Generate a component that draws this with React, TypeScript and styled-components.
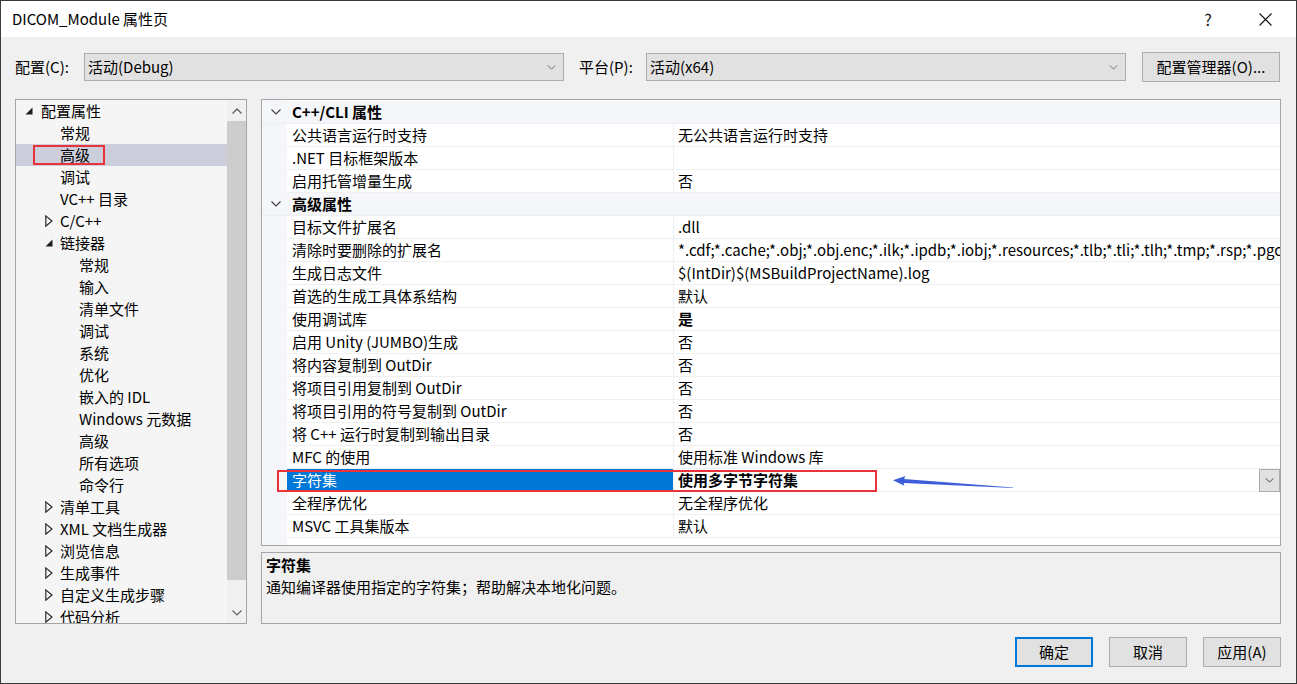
import React from "react";
import styled, { createGlobalStyle } from "styled-components";

const GlobalStyle = createGlobalStyle`
  html, body {
    margin: 0;
    padding: 0;
    background: #f0f0f0;
  }
  body {
    font-family: "Noto Sans CJK SC", "Noto Sans", sans-serif;
    font-size: 15px;
    color: #000;
  }
  * {
    box-sizing: border-box;
  }
`;

type TreeNode = {
  label: string;
  level: number;
  expand?: "open" | "closed";
  selected?: boolean;
};

const treeNodes: TreeNode[] = [
  { label: "配置属性", level: 0, expand: "open" },
  { label: "常规", level: 1 },
  { label: "高级", level: 1, selected: true },
  { label: "调试", level: 1 },
  { label: "VC++ 目录", level: 1 },
  { label: "C/C++", level: 1, expand: "closed" },
  { label: "链接器", level: 1, expand: "open" },
  { label: "常规", level: 2 },
  { label: "输入", level: 2 },
  { label: "清单文件", level: 2 },
  { label: "调试", level: 2 },
  { label: "系统", level: 2 },
  { label: "优化", level: 2 },
  { label: "嵌入的 IDL", level: 2 },
  { label: "Windows 元数据", level: 2 },
  { label: "高级", level: 2 },
  { label: "所有选项", level: 2 },
  { label: "命令行", level: 2 },
  { label: "清单工具", level: 1, expand: "closed" },
  { label: "XML 文档生成器", level: 1, expand: "closed" },
  { label: "浏览信息", level: 1, expand: "closed" },
  { label: "生成事件", level: 1, expand: "closed" },
  { label: "自定义生成步骤", level: 1, expand: "closed" },
  { label: "代码分析", level: 1, expand: "closed" },
];

type PropItem =
  | { kind: "category"; title: string }
  | { kind: "prop"; name: string; value: string; bold?: boolean; selected?: boolean };

const cleanExt =
  "*.cdf;*.cache;*.obj;*.obj.enc;*.ilk;*.ipdb;*.iobj;*.resources;*.tlb;*.tli;*.tlh;*.tmp;*.rsp;*.pgc;*.pgd;*.meta;*.tlog;*.manifest;*.res;*.pch;*.exp;*.idb;*.rep;*.xdc;*.pdb;*_manifest.rc;*.bsc;*.sbr;*.xml;*.metagen;*.bi";

const props: PropItem[] = [
  { kind: "category", title: "C++/CLI 属性" },
  { kind: "prop", name: "公共语言运行时支持", value: "无公共语言运行时支持" },
  { kind: "prop", name: ".NET 目标框架版本", value: "" },
  { kind: "prop", name: "启用托管增量生成", value: "否" },
  { kind: "category", title: "高级属性" },
  { kind: "prop", name: "目标文件扩展名", value: ".dll" },
  { kind: "prop", name: "清除时要删除的扩展名", value: cleanExt },
  { kind: "prop", name: "生成日志文件", value: "$(IntDir)$(MSBuildProjectName).log" },
  { kind: "prop", name: "首选的生成工具体系结构", value: "默认" },
  { kind: "prop", name: "使用调试库", value: "是", bold: true },
  { kind: "prop", name: "启用 Unity (JUMBO)生成", value: "否" },
  { kind: "prop", name: "将内容复制到 OutDir", value: "否" },
  { kind: "prop", name: "将项目引用复制到 OutDir", value: "否" },
  { kind: "prop", name: "将项目引用的符号复制到 OutDir", value: "否" },
  { kind: "prop", name: "将 C++ 运行时复制到输出目录", value: "否" },
  { kind: "prop", name: "MFC 的使用", value: "使用标准 Windows 库" },
  { kind: "prop", name: "字符集", value: "使用多字节字符集", bold: true, selected: true },
  { kind: "prop", name: "全程序优化", value: "无全程序优化" },
  { kind: "prop", name: "MSVC 工具集版本", value: "默认" },
];

const Chevron = ({ size = 9, color = "#444" }: { size?: number; color?: string }) => (
  <svg width={size} height={Math.round(size * 0.6)} viewBox="0 0 10 6">
    <path d="M0.5 0.5 L5 5 L9.5 0.5" fill="none" stroke={color} strokeWidth="1.1" />
  </svg>
);

const App = (): JSX.Element => {
  return (
    <>
      <GlobalStyle />
      <Window>
        <TitleBar>
          <TitleText>DICOM_Module 属性页</TitleText>
          <TitleButtons>
            <TitleButton>?</TitleButton>
            <TitleButton>
              <svg width="13" height="13" viewBox="0 0 13 13">
                <path d="M0.5 0.5 L12.5 12.5 M12.5 0.5 L0.5 12.5" stroke="#111" strokeWidth="1.1" />
              </svg>
            </TitleButton>
          </TitleButtons>
        </TitleBar>

        <ConfigRow>
          <FieldLabel $width={69}>配置(C):</FieldLabel>
          <Combo>
            <span>活动(Debug)</span>
            <Chevron color="#666" />
          </Combo>
          <FieldLabel $width={67} $gap={15}>平台(P):</FieldLabel>
          <Combo>
            <span>活动(x64)</span>
            <Chevron color="#666" />
          </Combo>
          <PushButton $width={138} $gap={16}>配置管理器(O)...</PushButton>
        </ConfigRow>

        <Main>
          <Tree>
            <TreeList>
              {treeNodes.map((node, i) => (
                <TreeItem key={i} $level={node.level} $selected={!!node.selected}>
                  {node.expand && (
                    <Expander $level={node.level}>
                      {node.expand === "open" ? (
                        <svg width="8" height="8" viewBox="0 0 8 8">
                          <path d="M7.5 0.5 L7.5 7.5 L0.5 7.5 Z" fill="#1e1e1e" />
                        </svg>
                      ) : (
                        <svg width="8" height="12" viewBox="0 0 8 12">
                          <path d="M0.8 0.8 L7 6 L0.8 11.2 Z" fill="none" stroke="#1e1e1e" strokeWidth="1.1" />
                        </svg>
                      )}
                    </Expander>
                  )}
                  {node.label}
                  {node.selected && <TreeMark />}
                </TreeItem>
              ))}
            </TreeList>
            <ScrollBar>
              <ScrollArrow>
                <svg width="10" height="6" viewBox="0 0 10 6">
                  <path d="M0.5 5.5 L5 1 L9.5 5.5" fill="none" stroke="#606060" strokeWidth="1.4" />
                </svg>
              </ScrollArrow>
              <ScrollThumb />
              <ScrollTrack />
              <ScrollArrow>
                <Chevron size={10} color="#606060" />
              </ScrollArrow>
            </ScrollBar>
          </Tree>

          <RightColumn>
            <Grid>
              {props.map((p, i) =>
                p.kind === "category" ? (
                  <CategoryRow key={i}>
                    <Gutter>
                      <Chevron size={10} color="#3c3c3c" />
                    </Gutter>
                    <CategoryTitle>{p.title}</CategoryTitle>
                  </CategoryRow>
                ) : (
                  <PropRow key={i}>
                    <Gutter />
                    <NameCell $selected={!!p.selected}>{p.name}</NameCell>
                    <ValueCell $bold={!!p.bold}>
                      <ValueText>{p.value}</ValueText>
                      {p.selected && (
                        <CellDrop>
                          <Chevron color="#333" />
                        </CellDrop>
                      )}
                    </ValueCell>
                    {p.selected && (
                      <>
                        <RowMark />
                        <Pointer width="122" height="14" viewBox="0 0 122 14">
                          <path
                            d="M0 4.2 L12.5 0 L11 2.9 L120 11.4 L120 12.1 L10.6 7 L11.4 9.8 Z"
                            fill="#3d5ed8"
                          />
                        </Pointer>
                      </>
                    )}
                  </PropRow>
                )
              )}
            </Grid>
            <Description>
              <DescTitle>字符集</DescTitle>
              <DescText>通知编译器使用指定的字符集；帮助解决本地化问题。</DescText>
            </Description>
          </RightColumn>
        </Main>

        <Footer>
          <PushButton $width={78} $primary>确定</PushButton>
          <PushButton $width={78}>取消</PushButton>
          <PushButton $width={78}>应用(A)</PushButton>
        </Footer>
      </Window>
    </>
  );
};

export default App;

const Window = styled.div`
  width: 1297px;
  height: 684px;
  border: 1px solid #3b3b3b;
  background: #f0f0f0;
  display: flex;
  flex-direction: column;
  overflow: hidden;
`;

const TitleBar = styled.div`
  height: 36px;
  background: #ffffff;
  display: flex;
  align-items: center;
  justify-content: space-between;
  padding: 0 8px 0 11px;
  flex-shrink: 0;
`;

const TitleText = styled.div`
  font-size: 15px;
  line-height: 20px;
`;

const TitleButtons = styled.div`
  display: flex;
  gap: 11px;
`;

const TitleButton = styled.div`
  width: 46px;
  height: 30px;
  display: flex;
  align-items: center;
  justify-content: center;
  font-size: 16px;
  color: #111;
`;

const ConfigRow = styled.div`
  display: flex;
  align-items: center;
  height: 30px;
  margin-top: 15px;
  padding-left: 14px;
  flex-shrink: 0;
`;

const FieldLabel = styled.div<{ $width: number; $gap?: number }>`
  width: ${(p) => p.$width}px;
  margin-left: ${(p) => p.$gap ?? 0}px;
  line-height: 20px;
  white-space: nowrap;
`;

const Combo = styled.div`
  width: 480px;
  height: 28px;
  background: #e1e1e1;
  border: 1px solid #adadad;
  display: flex;
  align-items: center;
  justify-content: space-between;
  padding: 0 7px 0 3px;
  line-height: 20px;
`;

const PushButton = styled.div<{ $width: number; $gap?: number; $primary?: boolean }>`
  width: ${(p) => p.$width}px;
  height: 30px;
  margin-left: ${(p) => p.$gap ?? 0}px;
  background: #e1e1e1;
  border: ${(p) => (p.$primary ? "2px solid #0078d7" : "1px solid #adadad")};
  display: flex;
  align-items: center;
  justify-content: center;
  line-height: 20px;
  white-space: nowrap;
`;

const Main = styled.div`
  display: flex;
  gap: 14px;
  height: 525px;
  margin-top: 17px;
  padding: 0 15px 0 14px;
  flex-shrink: 0;
`;

const Tree = styled.div`
  width: 232px;
  flex-shrink: 0;
  border: 1px solid #a5a5a5;
  background: #f5f5f5;
  display: flex;
  overflow: hidden;
`;

const TreeList = styled.div`
  flex: 1;
  overflow: hidden;
`;

const TreeItem = styled.div<{ $level: number; $selected: boolean }>`
  position: relative;
  height: 22px;
  line-height: 22px;
  padding-left: ${(p) => 25 + p.$level * 19}px;
  background: ${(p) => (p.$selected ? "#cccedb" : "transparent")};
  white-space: nowrap;
`;

const Expander = styled.span<{ $level: number }>`
  position: absolute;
  left: ${(p) => 9 + p.$level * 20}px;
  top: 0;
  height: 22px;
  display: flex;
  align-items: center;
`;

const TreeMark = styled.span`
  position: absolute;
  left: 17px;
  top: 1px;
  width: 72px;
  height: 20px;
  border: 2px solid #e8333b;
`;

const ScrollBar = styled.div`
  width: 19px;
  background: #f0f0f0;
  display: flex;
  flex-direction: column;
`;

const ScrollArrow = styled.div`
  height: 21px;
  display: flex;
  align-items: center;
  justify-content: center;
`;

const ScrollThumb = styled.div`
  height: 459px;
  background: #cdcdcd;
`;

const ScrollTrack = styled.div`
  flex: 1;
`;

const RightColumn = styled.div`
  flex: 1;
  display: flex;
  flex-direction: column;
  gap: 6px;
  min-width: 0;
`;

const Grid = styled.div`
  flex: 1;
  border: 1px solid #a5a5a5;
  padding-top: 1px;
  background: linear-gradient(to right, #f4f6fa 25px, #ffffff 25px);
  overflow: hidden;
`;

const CategoryRow = styled.div`
  display: grid;
  grid-template-columns: 25px 1fr;
  height: 23px;
  background: #f4f6fa;
  border-bottom: 1px solid #eceef2;
`;

const Gutter = styled.div`
  display: flex;
  align-items: center;
  justify-content: center;
  background: #f4f6fa;
  padding-left: 2px;
`;

const CategoryTitle = styled.div`
  font-weight: bold;
  line-height: 22px;
  padding-left: 5px;
`;

const PropRow = styled.div`
  position: relative;
  display: grid;
  grid-template-columns: 25px 387px 1fr;
  height: 23px;
`;

const NameCell = styled.div<{ $selected: boolean }>`
  line-height: 22px;
  padding-left: 5px;
  white-space: nowrap;
  overflow: hidden;
  background: ${(p) => (p.$selected ? "#0078d7" : "#ffffff")};
  color: ${(p) => (p.$selected ? "#ffffff" : "#000000")};
  border-bottom: 1px solid #f0f0f0;
  border-right: 1px solid #f0f0f0;
`;

const ValueCell = styled.div<{ $bold: boolean }>`
  display: flex;
  align-items: center;
  min-width: 0;
  padding-left: 4px;
  font-weight: ${(p) => (p.$bold ? "bold" : "normal")};
  border-bottom: 1px solid #f0f0f0;
  background: #ffffff;
`;

const ValueText = styled.div`
  flex: 1;
  line-height: 22px;
  white-space: nowrap;
  overflow: hidden;
`;

const CellDrop = styled.div`
  width: 21px;
  height: 23px;
  margin-bottom: -1px;
  background: #e1e1e1;
  border: 1px solid #adadad;
  display: flex;
  align-items: center;
  justify-content: center;
`;

const RowMark = styled.div`
  position: absolute;
  left: 15px;
  top: 1px;
  width: 600px;
  height: 22px;
  border: 2px solid #e8333b;
  pointer-events: none;
`;

const Pointer = styled.svg`
  position: absolute;
  left: 631px;
  top: 7px;
`;

const Description = styled.div`
  height: 72px;
  border: 1px solid #a5a5a5;
  background: #f0f0f0;
  padding: 1px 4px;
`;

const DescTitle = styled.div`
  font-weight: bold;
  line-height: 22px;
`;

const DescText = styled.div`
  line-height: 22px;
`;

const Footer = styled.div`
  display: flex;
  justify-content: flex-end;
  gap: 16px;
  margin-top: 13px;
  padding-right: 15px;
`;
